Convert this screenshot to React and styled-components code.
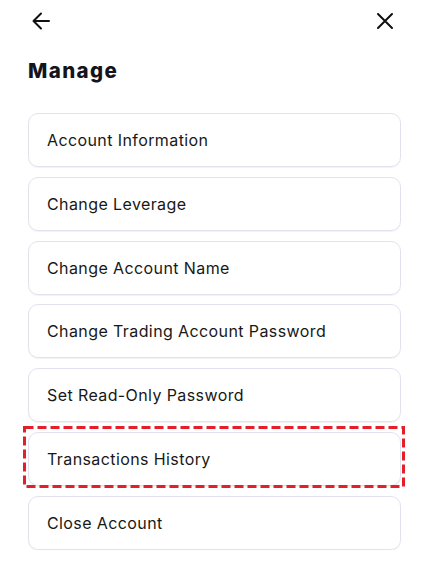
import React from "react";
import styled, { createGlobalStyle } from "styled-components";

const GlobalStyle = createGlobalStyle`
  body {
    margin: 0;
    background: #fff;
    font-family: "Inter", "Noto Sans", sans-serif;
  }
`;

const Page = styled.div`
  padding: 0 26px 0 28px;
`;

const Header = styled.div`
  height: 42px;
  display: flex;
  align-items: center;
  justify-content: space-between;
  padding: 0 8px 0 4px;
`;

const IconButton = styled.button`
  background: none;
  border: none;
  padding: 0;
  display: flex;
  align-items: center;
  color: #111;
`;

const Title = styled.h1`
  margin: 15px 0 0;
  font-size: 20.5px;
  line-height: 28px;
  font-weight: 800;
  letter-spacing: 1.4px;
  color: #14141c;
`;

const List = styled.ul`
  list-style: none;
  margin: 28px 0 0;
  padding: 0;
  display: flex;
  flex-direction: column;
  gap: 9.8px;
`;

const Item = styled.li`
  position: relative;
  height: 54px;
  box-sizing: border-box;
  display: flex;
  align-items: center;
  padding: 0 18px;
  border: 1px solid #e2e2ee;
  border-radius: 10px;
  box-shadow: 0 1px 1px rgba(30, 30, 80, 0.06);
  font-size: 16px;
  letter-spacing: 0.4px;
  color: #181818;
`;

const Highlight = styled.svg`
  position: absolute;
  top: -7px;
  left: -6px;
  width: calc(100% + 11px);
  height: calc(100% + 10px);
  overflow: visible;
  pointer-events: none;
`;

const items = [
  "Account Information",
  "Change Leverage",
  "Change Account Name",
  "Change Trading Account Password",
  "Set Read-Only Password",
  "Transactions History",
  "Close Account",
];

const App = () => {
  return (
    <Page>
      <GlobalStyle />
      <Header>
        <IconButton>
          <svg width="18" height="18" viewBox="0 0 18 18" fill="none" stroke="currentColor" strokeWidth="2" strokeLinecap="round" strokeLinejoin="round">
            <path d="M17 9H1.5M9 1.5L1.5 9L9 16.5" />
          </svg>
        </IconButton>
        <IconButton>
          <svg width="16" height="16" viewBox="0 0 16 16" fill="none" stroke="currentColor" strokeWidth="2" strokeLinecap="round">
            <path d="M1 1L15 15M15 1L1 15" />
          </svg>
        </IconButton>
      </Header>
      <Title>Manage</Title>
      <List>
        {items.map((label) => (
          <Item key={label}>
            {label}
            {label === "Transactions History" && (
              <Highlight preserveAspectRatio="none">
                <rect x="1.5" y="1.5" width="calc(100% - 3px)" height="calc(100% - 3px)" fill="none" stroke="#e3202a" strokeWidth="3" strokeDasharray="9 4" />
              </Highlight>
            )}
          </Item>
        ))}
      </List>
    </Page>
  );
};

export default App;
